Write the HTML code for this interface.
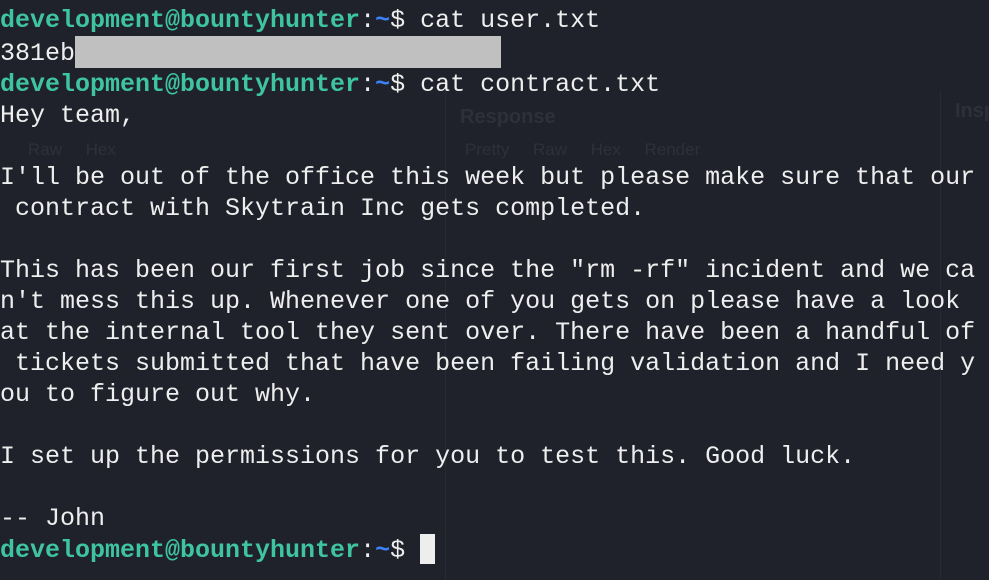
<!DOCTYPE html>
<html><head><style>
html,body{margin:0;padding:0;background:#20222b;width:989px;height:580px;overflow:hidden}
.bg{position:absolute;font-family:"Liberation Sans",sans-serif;color:#2d303a;font-size:17px}
pre{position:absolute;left:0;top:5px;margin:0;font-family:"Liberation Mono",monospace;font-size:25px;line-height:31px;color:#eeeeee;white-space:pre}
.p{color:#3ec4a0;font-weight:bold}
.t{color:#3b82f6;font-weight:bold}
.r{display:inline-block;background:#c0c0c0;width:426px;height:32px;vertical-align:-8px}
.cur{display:inline-block;background:#eeeeee;width:15px;height:30px;vertical-align:-7px}
</style></head><body>
<div class="bg" style="left:460px;top:106px;font-weight:bold;font-size:20px">Response</div>
<div class="bg" style="left:465px;top:140px">Pretty &nbsp;&nbsp;&nbsp; Raw &nbsp;&nbsp;&nbsp; Hex &nbsp;&nbsp;&nbsp; Render</div>
<div class="bg" style="left:28px;top:140px">Raw &nbsp;&nbsp;&nbsp; Hex</div>
<div class="bg" style="left:955px;top:100px;font-weight:bold;font-size:20px">Insp</div>
<div style="position:absolute;left:445px;top:90px;width:1px;height:490px;background:#272a33"></div>
<div style="position:absolute;left:940px;top:90px;width:1px;height:490px;background:#272a33"></div>
<pre><span class="p">development@bountyhunter</span>:<span class="t">~</span>$ cat user.txt
381eb<span class="r"></span>
<span class="p">development@bountyhunter</span>:<span class="t">~</span>$ cat contract.txt
Hey team,

I'll be out of the office this week but please make sure that our
 contract with Skytrain Inc gets completed.

This has been our first job since the "rm -rf" incident and we ca
n't mess this up. Whenever one of you gets on please have a look 
at the internal tool they sent over. There have been a handful of
 tickets submitted that have been failing validation and I need y
ou to figure out why.

I set up the permissions for you to test this. Good luck.

-- John
<span class="p">development@bountyhunter</span>:<span class="t">~</span>$ <span class="cur"></span></pre>
</body></html>
